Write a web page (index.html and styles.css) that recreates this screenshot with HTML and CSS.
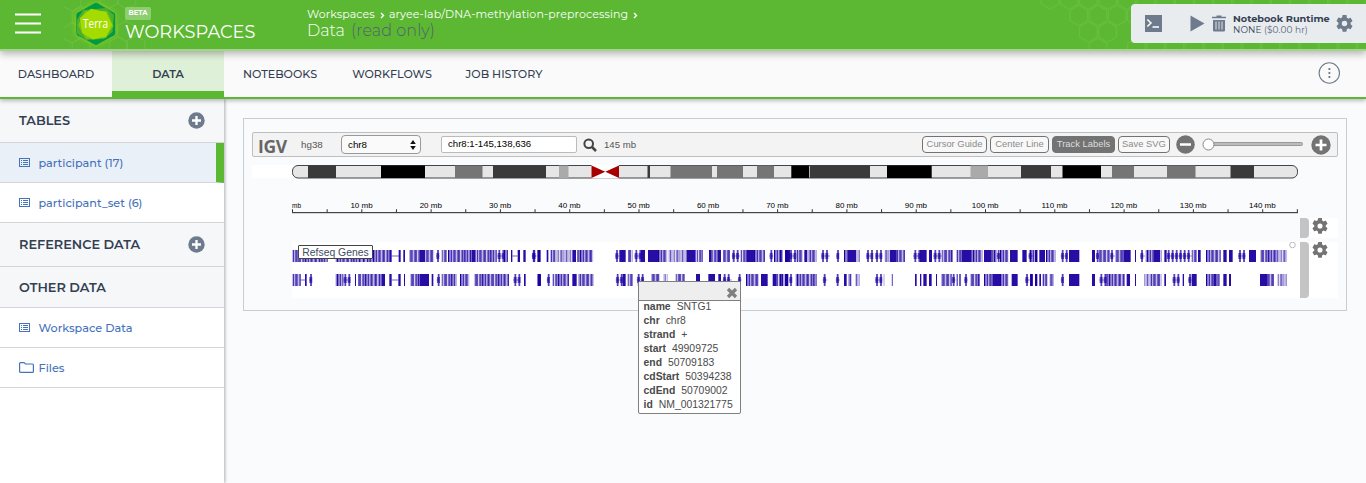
FILE: index.html
```html
<!DOCTYPE html>
<html lang="en">
<head>
<meta charset="utf-8">
<title>Terra - Workspaces</title>
<link rel="stylesheet" href="styles.css">
</head>
<body>
<svg class="defs" width="0" height="0">
  <defs>
    <path id="hex" d="M0-10.2L8.8-5.1V5.1L0 10.2L-8.8 5.1V-5.1Z"/>
    <path id="gear" d="M19.14 12.94c.04-.3.06-.61.06-.94s-.02-.64-.07-.94l2.03-1.58a.49.49 0 0 0 .12-.61l-1.92-3.32a.49.49 0 0 0-.59-.22l-2.39.96a7 7 0 0 0-1.62-.94l-.36-2.54A.48.48 0 0 0 13.92 2h-3.84a.48.48 0 0 0-.47.41l-.36 2.54c-.59.24-1.13.57-1.62.94l-2.39-.96a.48.48 0 0 0-.59.22L2.74 8.87a.48.48 0 0 0 .12.61l2.03 1.58c-.05.3-.09.63-.09.94s.02.64.07.94l-2.03 1.58a.49.49 0 0 0-.12.61l1.92 3.32c.12.22.37.29.59.22l2.39-.96c.5.38 1.03.7 1.62.94l.36 2.54c.05.24.24.41.48.41h3.84c.24 0 .44-.17.47-.41l.36-2.54c.59-.24 1.13-.56 1.62-.94l2.39.96c.22.08.47 0 .59-.22l1.92-3.32a.48.48 0 0 0-.12-.61zM12 15.2a3.2 3.2 0 1 1 0-6.4 3.2 3.2 0 0 1 0 6.4z"/>
    <g id="plus"><circle cx="8.5" cy="8.5" r="8.2"/><path d="M8.5 4v9M4 8.5h9" stroke="#fff" stroke-width="2.3"/></g>
    <g id="list" fill="none" stroke="currentColor"><rect x=".5" y=".5" width="10" height="8" stroke-width="1"/><path d="M2 2.500h1M4 2.500h5M2 4.500h1M4 4.500h5M2 6.500h1M4 6.500h5" stroke-width="1"/></g>
  </defs>
</svg>

<header class="top">
  <svg class="menu" width="26" height="22" viewBox="0 0 26 22"><path d="M0 1.500h26M0 10.500h26M0 19.500h26" stroke="#fff" stroke-width="2"/></svg>
  <svg class="logo" width="88" height="49" viewBox="0 0 88 49">
    <defs><filter id="glow" x="-30%" y="-30%" width="160%" height="160%"><feGaussianBlur stdDeviation="3"/></filter></defs>
    <g class="comb">
      <use href="#hex" x="8" y="1"/><use href="#hex" x="8" y="33"/><use href="#hex" x="17" y="17"/><use href="#hex" x="45" y="-2"/><use href="#hex" x="63" y="-1"/><use href="#hex" x="17" y="48"/><use href="#hex" x="54" y="47"/><use href="#hex" x="72" y="46"/><use href="#hex" x="62" y="31"/>
    </g>
    <path d="M32 3L51 14V34L32 45L12 34V14Z" fill="#9bdc12" opacity=".75" filter="url(#glow)"/>
    <path d="M30.500 3.200Q32 2.500 33.500 3.200L50 12.800Q51.200 13.500 51.200 15V33Q51.200 34.500 50 35.200L33.500 44.600Q32 45.400 30.500 44.600L13.500 35.200Q12.300 34.500 12.300 33V15Q12.300 13.500 13.500 12.800Z" fill="#009a44"/>
    <path d="M19 10L42 8L50 15L48.500 32L40 39L22 40L13 33.500V20Z" fill="#4fae2b"/>
    <path d="M21 11L43 11L49.500 26L42 38L22 39L14 25Z" fill="#78c41a"/>
    <path d="M27 8.800L42 12L48 25L42 36.500L29 39.500L18 33L16 18Z" fill="#a5dc00"/>
    <text x="31.500" y="28" text-anchor="middle" class="logo-text" textLength="25" lengthAdjust="spacingAndGlyphs">Terra</text>
  </svg>
  <div class="brand"><span class="beta">BETA</span><span class="title">WORKSPACES</span></div>
  <div class="crumbs">
    <div class="path"><span class="c1">Workspaces</span><svg width="5" height="7" viewBox="0 0 5 7"><path d="M1 1L3.500 3.500L1 6" fill="none" stroke="#fff" stroke-width="1.400"/></svg><span class="c2">aryee-lab/DNA-methylation-preprocessing</span><svg width="5" height="7" viewBox="0 0 5 7"><path d="M1 1L3.500 3.500L1 6" fill="none" stroke="#fff" stroke-width="1.400"/></svg></div>
    <div class="page">Data <span class="readonly">(read only)</span></div>
  </div>
  <svg class="comb right-comb" id="comb" width="326" height="49"></svg>
  <div class="runtime">
    <svg width="17" height="17" viewBox="0 0 17 17"><path d="M0 0h17v17H0z" fill="#6e7b8c"/><path d="M2.300 4.500L6 8L2.300 11.500M7.500 12h6.500" fill="none" stroke="#fff" stroke-width="1.500"/></svg>
    <svg class="play" width="15" height="17" viewBox="0 0 15 17"><path d="M.5.5L14.500 8.500L.5 16.500Z" fill="#6e7b8c"/></svg>
    <svg class="trash" width="14" height="17" viewBox="0 0 14 17"><path d="M0 2h4.500V.500h5V2H14M1 5h12v10.500q0 1-1 1H2q-1 0-1-1Z" fill="#6e7b8c"/><path d="M0 2.500h14" stroke="#6e7b8c" stroke-width="1.500"/><path d="M4 6.500v8M7 6.500v8M10 6.500v8" stroke="#dfe3e7"/></svg>
    <div class="rt-text"><b>Notebook Runtime</b><span>NONE <i>($0.00 hr)</i></span></div>
    <svg class="rt-gear" width="17" height="17" viewBox="2 2 20 20" fill="#6e7b8c"><use href="#gear"/></svg>
  </div>
</header>

<nav class="tabs">
  <a class="tab t1">DASHBOARD</a><a class="tab active">DATA</a><a class="tab t3">NOTEBOOKS</a><a class="tab t4">WORKFLOWS</a><a class="tab t5">JOB HISTORY</a>
  <svg class="more" width="22" height="22" viewBox="0 0 22 22"><circle cx="11.300" cy="11" r="10.200" fill="none" stroke="#6e7b8c" stroke-width="1.100"/><path d="M10.500 6h1.800v2h-1.800zM10.500 10h1.800v2h-1.800zM10.500 14h1.800v2h-1.800z" fill="#6e7b8c"/></svg>
</nav>

<div class="body">
  <aside class="side">
    <div class="head h1"><span>TABLES</span><svg width="17" height="17" fill="#6e7b8c"><use href="#plus"/></svg></div>
    <div class="item selected"><svg width="11" height="9"><use href="#list"/></svg><span>participant (17)</span></div>
    <div class="item"><svg width="11" height="9"><use href="#list"/></svg><span>participant_set (6)</span></div>
    <div class="head h2"><span>REFERENCE DATA</span><svg width="17" height="17" fill="#6e7b8c"><use href="#plus"/></svg></div>
    <div class="head h3"><span>OTHER DATA</span></div>
    <div class="item"><svg width="11" height="9"><use href="#list"/></svg><span>Workspace Data</span></div>
    <div class="item files"><svg width="15" height="11" viewBox="0 0 15 11"><path d="M.6 9.400V1.600q0-1 1-1H5L6.500 2H13.400q1 0 1 1V9.400q0 1-1 1H1.600q-1 0-1-1Z" fill="none" stroke="currentColor" stroke-width="1.200"/></svg><span>Files</span></div>
  </aside>
  <main class="content">
    <section class="igv">
      <div class="bar">
        <span class="igv-logo">IGV</span><span class="genome">hg38</span>
        <span class="select">chr8<svg width="6" height="10" viewBox="0 0 6 10"><path d="M3 0L5.800 4H.2ZM3 10L5.800 6H.2Z" fill="#111"/></svg></span>
        <span class="locus">chr8:1-145,138,636</span>
        <svg class="search" width="14" height="14" viewBox="0 0 14 14"><circle cx="5.700" cy="5.700" r="4.300" fill="none" stroke="#444" stroke-width="2"/><path d="M9 9L13 13" stroke="#444" stroke-width="2.500"/></svg>
        <span class="size">145 mb</span>
        <span class="btn b1">Cursor Guide</span><span class="btn b2">Center Line</span><span class="btn b3 on">Track Labels</span><span class="btn b4">Save SVG</span>
        <svg class="minus" width="19" height="19" viewBox="0 0 19 19"><circle cx="9.500" cy="9.500" r="9.300" fill="#737373"/><path d="M4 9.500h11" stroke="#fff" stroke-width="2.500"/></svg>
        <svg class="slider" width="101" height="13" viewBox="0 0 101 13"><rect x="8" y="4.500" width="92.500" height="3" rx="1" fill="#bbb" stroke="#999"/><circle cx="6.500" cy="6.500" r="5.500" fill="#fff" stroke="#888"/></svg>
        <svg width="20" height="20" viewBox="0 0 20 20"><circle cx="10" cy="10" r="9.700" fill="#737373"/><path d="M10 4.500v11M4.500 10h11" stroke="#fff" stroke-width="2.700"/></svg>
      </div>
      <div class="ideo-row"><svg id="ideogram" width="1007" height="14"></svg></div>
      <div class="ruler-row"><svg id="ruler" width="1007" height="19"></svg></div>
      <div class="track empty"><div></div><div class="handle"></div><div class="tool"><svg width="16" height="16" viewBox="2 2 20 20" fill="#737373"><use href="#gear"/></svg></div></div>
      <div class="track genes">
        <div class="lane"><svg id="genes" width="1008" height="56"></svg><span class="label">Refseq Genes</span></div>
        <div class="handle"></div><div class="tool"><svg width="16" height="16" viewBox="2 2 20 20" fill="#737373"><use href="#gear"/></svg></div>
      </div>
      <div class="popover">
        <div class="pop-head"><svg width="12" height="12" viewBox="0 0 12 12"><path d="M2 2L10 10M10 2L2 10" stroke="#7f7f7f" stroke-width="3.300"/></svg></div>
        <div class="pop-body">
          <p><b>name</b>SNTG1</p><p><b>chr</b>chr8</p><p><b>strand</b>+</p><p><b>start</b>49909725</p><p><b>end</b>50709183</p><p><b>cdStart</b>50394238</p><p><b>cdEnd</b>50709002</p><p><b>id</b>NM_001321775</p>
        </div>
      </div>
    </section>
  </main>
</div>
<script src="app.js"></script>
</body>
</html>
```
FILE: styles.css
```css
* { box-sizing: border-box; }
body { margin: 0; height: 483px; overflow: hidden; background: #fafbfd; font-family: Montserrat, Inter, sans-serif; color: #333f52; }
svg { display: block; flex: none; }
.defs { position: absolute; }
.top { position: relative; z-index: 3; display: flex; align-items: flex-start; height: 51px; background: #5cb832; border-bottom: 2px solid #a3d68c; box-shadow: 0 3px 7px rgba(0,0,0,.28); color: #fff; }
.menu { margin: 13px 0 0 15px; }
.logo { margin-left: 23px; }
.logo-text { font: 12.5px "Open Sans", sans-serif; fill: #fff; }
.comb { fill: none; stroke: #85cc60; stroke-width: 1; opacity: .35; }
.brand { position: relative; width: 155px; margin: 7px 0 0 -27px; display: flex; flex-direction: column; align-items: flex-start; }
.beta { width: 26px; height: 13px; border-radius: 2px; background: #8dce70; font-size: 6.8px; font-weight: 700; line-height: 12px; text-align: center; }
.title { font-size: 17.8px; line-height: 22px; margin-top: 1px; }
.crumbs { margin: 6px 0 0 27px; width: 340px; white-space: nowrap; }
.path { display: flex; align-items: center; height: 16px; font-size: 11px; }
.c1 { width: 69px; letter-spacing: .12px; }
.path svg { margin: 2px 4px 0; }
.path .c2 { width: 240px; letter-spacing: .12px; }
.page { font-size: 16px; line-height: 18px; letter-spacing: 0; font-weight: 350; }
.readonly { color: #535f70; margin-left: 2px; font-weight: 300; letter-spacing: .08px; }
.right-comb { position: absolute; right: 0; top: 0; }
.runtime { position: relative; margin: 4px 0 0 auto; width: 235px; height: 39px; background: #e9ecef; border-radius: 4px 0 0 4px; display: flex; align-items: center; padding-left: 14px; color: #333f52; }
.play { margin-left: 28px; }
.trash { margin-left: 7px; }
.rt-text { width: 98px; margin: 1px 0 0 7px; display: flex; flex-direction: column; line-height: 11px; white-space: nowrap; }
.rt-text b { font-size: 9.7px; }
.rt-text span { font-size: 9px; letter-spacing: .08px; }
.rt-text i { font-style: normal; color: #5a6779; }
.rt-gear { margin-left: 5px; }
.tabs { position: relative; z-index: 2; height: 48px; display: flex; background: #fafafa; border-bottom: 2px solid #5cb832; box-shadow: 0 2px 4px rgba(0,0,0,.25); }
.tab { width: 112px; height: 46px; font-size: 11.15px; line-height: 46px; text-align: center; font-weight: 500; }
.tab.active { font-weight: 600; background: #dff0d8; border-bottom: 6px solid #5cb832; }
.more { margin: 11px 26px 0 auto; overflow: visible; }
.body { display: flex; height: 384px; }
.side { width: 224px; background: #fff; box-shadow: 1px 0 3px rgba(0,0,0,.3); color: #4472bb; }
.head { display: flex; align-items: center; justify-content: space-between; padding: 0 19px; background: #f6f7f9; border-bottom: 1px solid #d3d5d9; color: #333f52; font-size: 12.85px; font-weight: 600; }
.h1, .h2 { height: 44px; }
.h3 { height: 41px; }
.item { display: flex; align-items: center; height: 40px; padding-left: 19px; gap: 8.5px; border-bottom: 1px solid #d3d5d9; font-size: 11.25px; font-weight: 500; }
.selected { background: #eaf0f8; border-right: 8px solid #5cb832; }
.files { gap: 4.5px; }
.content { flex: 1; padding: 19px 19px 0; }
.igv { position: relative; height: 193px; border: 1px solid #c8ccd3; padding: 13px 8px 0; font-family: "Liberation Sans", sans-serif; color: #555; }
.bar { display: flex; align-items: center; height: 25px; background: #f3f3f3; border: 1px solid #bfbfbf; border-radius: 2px; font-size: 10px; white-space: nowrap; padding-left: 5px; }
.igv-logo { width: 43px; padding-top: 3px; font: 700 17.5px/18px "Open Sans", sans-serif; letter-spacing: -.3px; color: #666; }
.genome { width: 40px; font-size: 9.8px; }
.select { display: flex; justify-content: space-between; align-items: center; width: 80px; height: 19px; padding: 0 4px 0 6px; border: 1px solid #999; border-radius: 4px; background: #fafafa; color: #000; font-size: 9.8px; }
.locus { width: 136px; height: 17px; margin-left: 20px; padding-left: 6px; line-height: 14px; border: 1px solid #bbb; border-radius: 2px; background: #fff; color: #000; font-size: 9.6px; }
.search { margin-left: 5.5px; }
.size { margin-left: 7.5px; font-size: 9.6px; }
.btn { height: 17px; border: 1px solid #737373; border-radius: 4px; line-height: 14px; text-align: center; color: #8b8b8b; background: #f8f8f8; margin-left: 3px; font-size: 9.4px; }
.b1 { width: 65px; margin-left: auto; }
.b2 { width: 59px; }
.b3 { width: 63px; }
.b4 { width: 52px; }
.btn.on { background: #737373; color: #ddd; }
.minus { margin-left: 6px; }
.slider { margin: 0 8px 0 7px; }
.bar > svg:last-child { margin-right: 6px; }
.ideo-row { margin-top: 8px; height: 13px; width: 40px; background: #fff; padding-left: 40px; }
.ruler-row { margin: 18px 0 0 40px; height: 22px; }
.ruler-row svg { font: 8px "Liberation Sans", sans-serif; }
.track { display: grid; grid-template-columns: 1008px 9px 29px; margin-left: 40px; }
.empty { height: 20px; }
.genes { height: 56px; margin-top: 4px; }
.lane { position: relative; background: #fff; }
.label { position: absolute; left: 6px; top: 3px; width: 75px; height: 14px; border: 1px solid #444; border-radius: 1px; background: #fff; font-size: 10.4px; line-height: 13px; text-align: center; color: #3d4d61; }
.handle { background: #c4c4c4; border-radius: 0 4px 4px 0; }
.tool { background: #fff; padding: 0 0 0 3px; }
.popover { position: absolute; left: 394px; top: 162px; width: 103px; height: 133px; border: 1px solid #7f7f7f; border-radius: 2px; background: #fff; color: #4a4a4a; font-size: 10.4px; }
.pop-head { height: 19px; background: #eee; border-bottom: 1px solid #7f7f7f; display: flex; justify-content: flex-end; padding: 5px 2px 0 0; }
.pop-body { margin-top: -1px; }
.pop-body p { margin: 0; padding-left: 4.5px; line-height: 14px; white-space: nowrap; }
.pop-body b { margin-right: 6px; }
```
FILE: app.js
```js
const NS = "http://www.w3.org/2000/svg";

function add(parent, tag, attrs, text) {
  const node = document.createElementNS(NS, tag);
  for (const key in attrs) node.setAttribute(key, attrs[key]);
  if (text) node.textContent = text;
  parent.appendChild(node);
  return node;
}

function rect(parent, x, y, width, height, fill, opacity = 1) {
  add(parent, "rect", { x, y, width, height, fill, opacity });
}

// Header honeycomb
const comb = document.getElementById("comb");
for (let row = 0; row < 4; row++) {
  for (let col = 0; col < 17; col++) {
    if ((row === 1 && col < 1) || (row === 2 && (col < 2 || col === 4)) || (row === 3 && (col < 2 || col === 3))) continue;
    add(comb, "use", { href: "#hex", x: 10 + col * 19.2 + (row % 2) * 9.6, y: -1 + row * 16.5 });
  }
}

// Chromosome bands: start, end, shade
const ideogram = document.getElementById("ideogram");
const bands = [[16,44,"#3a3a3a"],[89,133,"#000"],[163,190.5,"#757575"],[201,254,"#3a3a3a"],[267,276.5,"#aaa"],
  [355.5,358,"#3a3a3a"],[378.5,420,"#757575"],[425,451,"#757575"],[465,482,"#757575"],[499.3,517,"#000"],
  [517.7,578,"#3a3a3a"],[595,639.7,"#000"],[678.5,696,"#aaa"],[729,759,"#3a3a3a"],[770.5,809,"#000"],
  [820,842,"#757575"],[875,903.5,"#757575"],[938.5,962,"#3a3a3a"]];
add(ideogram, "rect", { x: .5, y: .5, width: 1005, height: 12.5, rx: 5.5, fill: "#e6e6e6", stroke: "#444" });
bands.forEach(([a, b, c]) => rect(ideogram, a, .5, b - a, 12.5, c));
rect(ideogram, 299.5, 0, 27.5, 13.5, "#fff");
add(ideogram, "path", { d: "M299.500 .5L313.250 6.800L299.500 13ZM327 .5L313.250 6.800L327 13Z", fill: "#a80000" });

// Base-pair ruler
const ruler = document.getElementById("ruler");
rect(ruler, 0, 16, 1006, 1.2, "#444");
for (let mb = 0; mb <= 145; mb += 5) {
  const x = .5 + mb * 6.93;
  rect(ruler, x - .5, 13.2, 1, 3, "#333");
  if (mb === 0) add(ruler, "text", { x: 0, y: 12, textLength: 9, lengthAdjust: "spacingAndGlyphs", fill: "#000" }, "mb");
  else if (mb % 10 === 0) add(ruler, "text", { x: x - .3, y: 12, "text-anchor": "middle", fill: "#000" }, mb + " mb");
}

// Gene clusters. Each group has an origin and spans in thirds of a pixel:
// s solid, m mixed, l light, d small arrows on an intron line, h intron line
const rows = [
  { y: 8, groups: [
    [-12, "38-55m 55-143m 167-275m 275-328m 328-335s 335-358h 356-362s 370-375s 387-418m 418-435s 435-463m 468-478d 485-500m 504-575m 575-587s 590-650m 652-670d 672-684m 693-697s 697-712h 713-720s 730-737s 757-767d 772-780s"],
    [238, "5-20d 25-32s 50-55s 62-75m 75-125l 127-138s 142-190m 255-268d 268-287s 295-308m 313-332d 333-345s 354-384s 384-412m 415-470l 470-497s 500-518m 537-545s 545-560m 562-573s 580-600m 605-630d 632-650m 650-672s 672-705m 718-730d 732-757m 765-780s"],
    [488, "0-8m 15-25s 27-45d 50-68m 73-82s 85-110m 123-150d 168-177d 192-202m 202-228s 228-240l 258-274d 285-307d 312-330l 330-350s 350-375m 400-420d 420-440s 447-456s 460-485d 485-518m 530-545m 545-575s 575-608m 612-634s 634-650m 650-660d 660-685m 690-713s 727-740s 745-760d 765-772s"],
    [738, "0-22m 28-45s 48-77m 92-108d 117-148s 186-195s 197-208d 208-240m 240-255d 255-280m 280-302s 315-318s 330-345d 347-372m 372-390s 390-395m 403-410s 410-485d 485-500m 504-512s 528-572m 580-590s 597-608s 624-648d 657-678s 690-740m 740-770l"]
  ]},
  { y: 32, groups: [
    [-12, "38-62m 62-75h 75-80s 87-95d 167-190m 190-210d 225-228s 235-305m 305-315s 328-335s 335-355h 355-362s 372-375s 390-420m 420-447s 455-460s 470-477d 485-530m 540-568m 582-630m 630-687m 700-720d 732-737s 773-780s"],
    [238, "23-33s 50-57d 68-117m 127-140s 145-190m 257-278d 278-287s 293-308m 320-343d 363-390m 400-413l 437-465m 498-510s 535-555s 565-573s 578-605d 623-635d 648-687m 693-713s 728-740s 740-760m 765-775s"],
    [488, "0-8m 14-24s 27-36d 47-110m 128-142d 167-180d 192-200s 205-215m 227-240l 285-307d 310-314l 333-339m 405-410s 420-424s 430-440s 447-455s 468-471s 483-515m 515-527d 530-533s 538-542s 552-563d 570-600m 612-637m 637-660s 660-685m 695-713s 735-750d 753-758s 765-772s"],
    [738, "0-8s 15-20s 28-33s 38-52m 57-70m 92-98d 117-148s 186-195s 208-225d 225-285m 290-300s 315-318s 342-362l 362-395m 403-408s 427-450d 458-462s 474-485d 485-500s 528-550m 550-560s 562-570m 580-590s 597-603s 690-712s 712-732m 743-770l"]
  ]}
];
const genes = document.getElementById("genes");
const dark = "#1c00a0";
const shadesMixed = [1, .45, .8, .3, .95, .6, .25, .95, .7, .15, .9, .5];
const shadesLight = [.4, .2, .65, .3, .25, .5, .1, .75, .35];
rows.forEach(({ y, groups }) => groups.forEach(([origin, spans]) => spans.split(" ").forEach((span) => {
  const [, a, b, kind] = span.match(/(\d+)-(\d+)(\w)/);
  // Lane coordinates start at the lane's left edge, one group unit is a third of a pixel
  const start = origin + a / 3, end = origin + b / 3;
  if (kind === "s") rect(genes, start, y, end - start, 12, dark, .95);
  else if (kind === "h") rect(genes, start, y + 5.5, end - start, 1, dark, .6);
  else if (kind === "d") {
    rect(genes, start, y + 5.5, end - start, 1, dark, .45);
    for (let x = start; x < end - 1; x += 4) {
      rect(genes, x + .3, y + 3, 3, 6, dark, .6);
      rect(genes, x + 1.1, y, 1.8, 12, dark, .75);
    }
  } else {
    const shades = kind === "l" ? shadesLight : shadesMixed;
    let i = Number(a) % shades.length;
    for (let x = start; x < end; x += 1.35) rect(genes, x, y, Math.min(1.35, end - x), 12, dark, shades[i++ % shades.length]);
  }
})));
add(genes, "circle", { cx: 1000.5, cy: 3, r: 2.8, fill: "#fff", stroke: "#bbb" });
```
